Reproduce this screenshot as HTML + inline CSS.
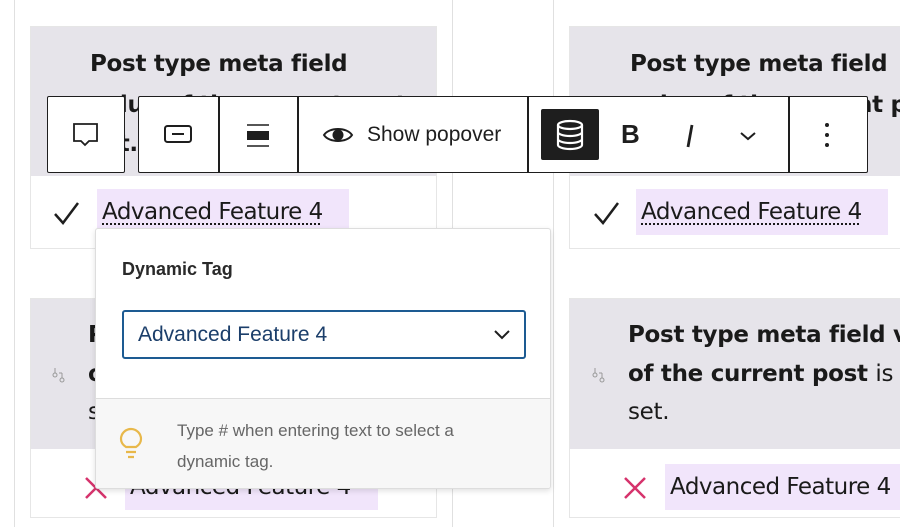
<!DOCTYPE html>
<html><head><meta charset="utf-8"><style>
*{box-sizing:border-box;margin:0;padding:0}
html,body{width:900px;height:527px;overflow:hidden}
body{background:#fff;position:relative;font-family:"Liberation Sans",sans-serif;color:#1e1e1e}
.abs{position:absolute}
.vl{position:absolute;top:0;width:1px;height:527px;background:#e0e0e0}
.card{position:absolute;border:1px solid #e6e6e6;background:#fff}
.hd{position:absolute;left:0;right:0;top:0;background:#e6e4ea}
.ht{position:absolute;font-family:"DejaVu Sans","Liberation Sans",sans-serif;font-weight:bold;font-size:23px;color:#1a1a1a;white-space:nowrap;letter-spacing:-0.3px}
.hl{position:absolute;background:#f1e5fb;height:46px;font-family:"DejaVu Sans",sans-serif;font-size:23px;line-height:46px;padding-left:5px;white-space:nowrap;color:#1a1a1a;letter-spacing:-0.5px;overflow:hidden}
.dot{text-decoration:underline dotted;text-underline-offset:4px;text-decoration-thickness:2px}
.tb{position:absolute;background:#fff;border:1.5px solid #1e1e1e;border-radius:2px}
.sep{position:absolute;top:0;bottom:0;width:1.5px;background:#1e1e1e}
</style></head><body>
<div class="vl" style="left:14px"></div>
<div class="vl" style="left:452px"></div>
<div class="vl" style="left:553px"></div>

<!-- upper left card -->
<div class="card" style="left:30px;top:26px;width:407px;height:223px">
 <div class="hd" style="height:149px"></div>
</div>
<div class="ht" style="left:90px;top:51px">Post type meta field</div>
<div class="ht" style="left:90px;top:92px">value of the current post</div>
<div class="ht" style="left:90px;top:131px">set.</div>
<svg class="abs" style="left:52px;top:200px" width="30" height="28" viewBox="0 0 30 28"><path d="M3 14l8 9L26 3" fill="none" stroke="#1e1e1e" stroke-width="2.5"/></svg>
<div class="hl" style="left:97px;top:189px;width:252px"><span class="dot">Advanced Feature 4</span></div>

<!-- upper right card -->
<div class="card" style="left:569px;top:26px;width:332px;height:223px;border-right:none">
 <div class="hd" style="height:149px"></div>
</div>
<div class="ht" style="left:630px;top:51px">Post type meta field</div>
<div class="ht" style="left:630px;top:92px;width:270px;overflow:hidden">value of the current post</div>
<svg class="abs" style="left:592px;top:200px" width="30" height="28" viewBox="0 0 30 28"><path d="M3 14l8 9L26 3" fill="none" stroke="#1e1e1e" stroke-width="2.5"/></svg>
<div class="hl" style="left:636px;top:189px;width:252px"><span class="dot">Advanced Feature 4</span></div>

<!-- lower left card -->
<div class="card" style="left:30px;top:298px;width:407px;height:220px">
 <div class="hd" style="height:150px"></div>
</div>
<div class="ht" style="left:88px;top:322px">Post type meta field v</div>
<div class="ht" style="left:88px;top:361px">of the current post</div>
<div class="ht" style="left:88px;top:399px;font-weight:normal">set.</div>
<svg class="abs" style="left:52px;top:366px" width="14" height="18" viewBox="0 0 14 18"><g fill="none" stroke="#999" stroke-width="1"><circle cx="3" cy="9" r="2"/><circle cx="10" cy="14" r="2"/><path d="M3 2v5M10 7v5M10 7h-3"/></g></svg>
<svg class="abs" style="left:82px;top:474px" width="28" height="28" viewBox="0 0 28 28"><path d="M4 4l20 20M24 4L4 24" stroke="#d6336c" stroke-width="2.5"/></svg>
<div class="hl" style="left:125px;top:464px;width:253px">Advanced Feature 4</div>

<!-- lower right card -->
<div class="card" style="left:569px;top:298px;width:332px;height:220px;border-right:none">
 <div class="hd" style="height:150px"></div>
</div>
<div class="ht" style="left:628px;top:322px;width:272px;overflow:hidden">Post type meta field v</div>
<div class="ht" style="left:628px;top:361px">of the current post <span style="font-weight:normal">is</span></div>
<div class="ht" style="left:628px;top:399px;font-weight:normal">set.</div>
<svg class="abs" style="left:592px;top:366px" width="14" height="18" viewBox="0 0 14 18"><g fill="none" stroke="#999" stroke-width="1"><circle cx="3" cy="9" r="2"/><circle cx="10" cy="14" r="2"/><path d="M3 2v5M10 7v5M10 7h-3"/></g></svg>
<svg class="abs" style="left:621px;top:474px" width="28" height="28" viewBox="0 0 28 28"><path d="M4 4l20 20M24 4L4 24" stroke="#d6336c" stroke-width="2.5"/></svg>
<div class="hl" style="left:665px;top:464px;width:235px">Advanced Feature 4</div>

<!-- toolbar -->
<div class="tb" style="left:47px;top:96px;width:78px;height:77px">
 <svg class="abs" style="left:24px;top:24px" width="28" height="28" viewBox="0 0 28 28"><path d="M2 3h23v17H17l-4 4-4-4H2z" fill="none" stroke="#1e1e1e" stroke-width="1.8"/></svg>
</div>
<div class="tb" style="left:138px;top:96px;width:730px;height:77px">
 <svg class="abs" style="left:24px;top:26px" width="32" height="24" viewBox="0 0 32 24"><rect x="2" y="3" width="26" height="16" rx="2.5" fill="none" stroke="#1e1e1e" stroke-width="2"/><path d="M9 11h12" stroke="#1e1e1e" stroke-width="2"/></svg>
 <div class="sep" style="left:79px"></div>
 <svg class="abs" style="left:106px;top:26px" width="26" height="26" viewBox="0 0 26 26"><path d="M2 2h22M2 23h22" stroke="#1e1e1e" stroke-width="1.6"/><rect x="2" y="8" width="22" height="9" fill="#1e1e1e"/></svg>
 <div class="sep" style="left:158px"></div>
 <svg class="abs" style="left:183px;top:26px" width="32" height="24" viewBox="0 0 32 24"><path d="M2 12C7 4 25 4 30 12C25 20 7 20 2 12z" fill="none" stroke="#1e1e1e" stroke-width="2"/><circle cx="16" cy="12" r="5.5" fill="#1e1e1e"/></svg>
 <div class="abs" style="left:228px;top:26px;font-size:21px;color:#1e1e1e">Show popover</div>
 <div class="sep" style="left:388px"></div>
 <div class="abs" style="left:402px;top:12px;width:58px;height:51px;background:#1e1e1e;border-radius:2px">
  <svg class="abs" style="left:14px;top:10px" width="30" height="32" viewBox="0 0 30 32"><g fill="none" stroke="#fff" stroke-width="2.2"><ellipse cx="15" cy="6" rx="12" ry="4"/><path d="M3 6v20c0 2 5 4 12 4s12-2 12-4V6M3 13c0 2 5 4 12 4s12-2 12-4M3 20c0 2 5 4 12 4s12-2 12-4"/></g></svg>
 </div>
 <div class="abs" style="left:482px;top:22px;font-size:26px;font-weight:bold">B</div>
 <svg class="abs" style="left:544px;top:26px" width="14" height="26" viewBox="0 0 14 26"><path d="M9 2L5 24" stroke="#1e1e1e" stroke-width="2.8"/></svg>
 <svg class="abs" style="left:598px;top:32px" width="22" height="14" viewBox="0 0 22 14"><path d="M4 4l7 6 7-6" fill="none" stroke="#1e1e1e" stroke-width="2"/></svg>
 <div class="sep" style="left:649px"></div>
 <svg class="abs" style="left:684px;top:24px" width="8" height="28" viewBox="0 0 8 28"><circle cx="4" cy="4" r="2" fill="#1e1e1e"/><circle cx="4" cy="14" r="2" fill="#1e1e1e"/><circle cx="4" cy="24" r="2" fill="#1e1e1e"/></svg>
</div>

<!-- popover -->
<div class="abs" style="left:95px;top:228px;width:456px;height:261px;background:#fff;border:1px solid #ddd;border-radius:3px;box-shadow:0 2px 6px rgba(0,0,0,.12);overflow:hidden">
 <div class="abs" style="left:26px;top:30px;font-size:18px;font-weight:bold;color:#2a2a2a">Dynamic Tag</div>
 <div class="abs" style="left:26px;top:81px;width:404px;height:49px;border:2px solid #1d5b92;border-radius:3px">
  <div class="abs" style="left:14px;top:11px;font-size:21px;color:#1b3e6a">Advanced Feature 4</div>
  <svg class="abs" style="left:368px;top:16px" width="20" height="14" viewBox="0 0 20 14"><path d="M3 3l7 7 7-7" fill="none" stroke="#1e1e1e" stroke-width="2"/></svg>
 </div>
 <div class="abs" style="left:0;top:169px;width:456px;height:92px;background:#f7f7f7;border-top:1px solid #ddd">
  <svg class="abs" style="left:22px;top:28px" width="28" height="36" viewBox="0 0 28 36"><g fill="none" stroke="#e8b84a" stroke-width="2.2"><path d="M8 20c-3-2-5-5-5-8a10 10 0 0 1 20 0c0 3-2 6-5 8z"/><path d="M8 25h10M10 30h6"/></g></svg>
  <div class="abs" style="left:81px;top:16px;font-size:17px;color:#666;line-height:31px;width:320px">Type # when entering text to select a dynamic tag.</div>
 </div>
</div>
</body></html>
